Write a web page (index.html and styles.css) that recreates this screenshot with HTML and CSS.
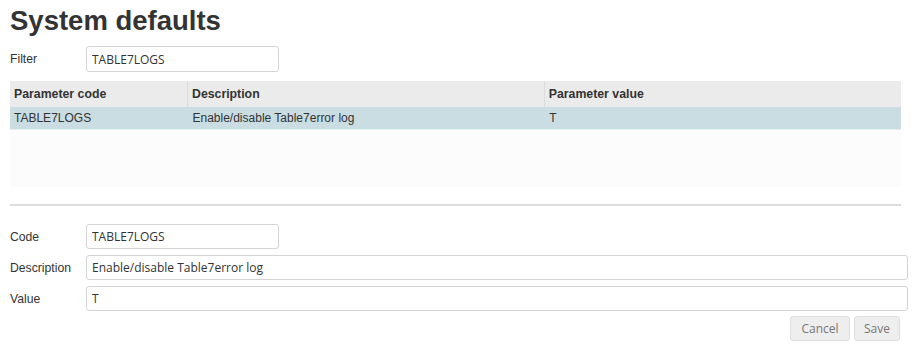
FILE: index.html
```html
<!DOCTYPE html>
<html lang="en">

<head>
    <meta charset="UTF-8">
    <title>System defaults</title>
    <link rel="stylesheet" href="styles.css">
</head>

<body>
    <h1>System defaults</h1>

    <div class="form-row">
        <label for="filter">Filter</label>
        <input type="text" class="form-control short" id="filter" value="TABLE7LOGS">
    </div>

    <div class="grid-box">
        <table class="grid">
            <thead>
                <tr>
                    <th class="col-code">Parameter code</th>
                    <th class="col-desc">Description</th>
                    <th class="col-value">Parameter value</th>
                </tr>
            </thead>
            <tbody>
                <tr class="selected">
                    <td>TABLE7LOGS</td>
                    <td>Enable/disable Table7error log</td>
                    <td>T</td>
                </tr>
            </tbody>
        </table>
    </div>

    <hr class="divider">

    <form class="edit-form">
        <div class="form-row">
            <label for="code">Code</label>
            <input type="text" class="form-control short" id="code" value="TABLE7LOGS">
        </div>
        <div class="form-row">
            <label for="description">Description</label>
            <input type="text" class="form-control" id="description" value="Enable/disable Table7error log">
        </div>
        <div class="form-row">
            <label for="value">Value</label>
            <input type="text" class="form-control" id="value" value="T">
        </div>
        <div class="actions">
            <button type="button" class="btn btn-cancel">Cancel</button>
            <button type="submit" class="btn btn-save">Save</button>
        </div>
    </form>
</body>

</html>
```

FILE: styles.css
```css
body {
    font-family: "Liberation Sans", Arial, sans-serif;
    color: #333;
    background-color: #fff;
    margin: 0;
    padding: 0 8px 0 10px;
}

h1 {
    font-size: 27.5px;
    line-height: 32px;
    font-weight: bold;
    margin: 0;
    padding-top: 5px;
}

.form-row {
    display: grid;
    grid-template-columns: 76px 1fr;
    align-items: center;
    font-size: 12.2px;
}

h1 + .form-row {
    margin-top: 9px;
}

.form-control {
    height: 25px;
    padding: 0 5px;
    font-family: "Open Sans", sans-serif;
    font-size: 12px;
    color: #333;
    border: 1px solid #d4d4d4;
    border-radius: 3px;
    box-sizing: border-box;
    background-color: #fff;
    outline: none;
}

.form-control.short {
    width: 193px;
}

#filter {
    height: 26px;
}

.grid-box {
    width: 891px;
    height: 106px;
    margin-top: 9px;
    background-color: #fcfcfc;
}

.grid {
    width: 100%;
    border-collapse: collapse;
    table-layout: fixed;
    font-size: 12px;
}

.grid th {
    height: 26px;
    padding: 0 4px;
    text-align: left;
    font-size: 12.3px;
    background-color: #ebebeb;
    border-left: 1px solid #dcdcdc;
}

.grid th.col-code {
    width: 169px;
    border-left: none;
}

.grid td {
    height: 22px;
    padding: 0 4px 0 5px;
    border-bottom: 1px solid #e4eef1;
}

.grid td:first-child {
    padding-left: 4px;
}

.grid tr.selected td {
    background-color: #cadde3;
}

.divider {
    width: 891px;
    height: 2px;
    margin: 17px 0 18px;
    border: none;
    background-color: #dcdcdc;
}

.edit-form {
    display: flex;
    flex-direction: column;
    gap: 6px;
}

.actions {
    display: flex;
    justify-content: flex-end;
    gap: 4px;
    margin: -1px 8px 0 0;
}

.btn {
    height: 25px;
    padding: 0;
    font-family: "Open Sans", sans-serif;
    font-size: 12px;
    color: #777;
    background-color: #eee;
    border: 1px solid #ddd;
    border-radius: 3px;
    cursor: pointer;
}

.btn-cancel {
    width: 60px;
}

.btn-save {
    width: 46px;
}
```
